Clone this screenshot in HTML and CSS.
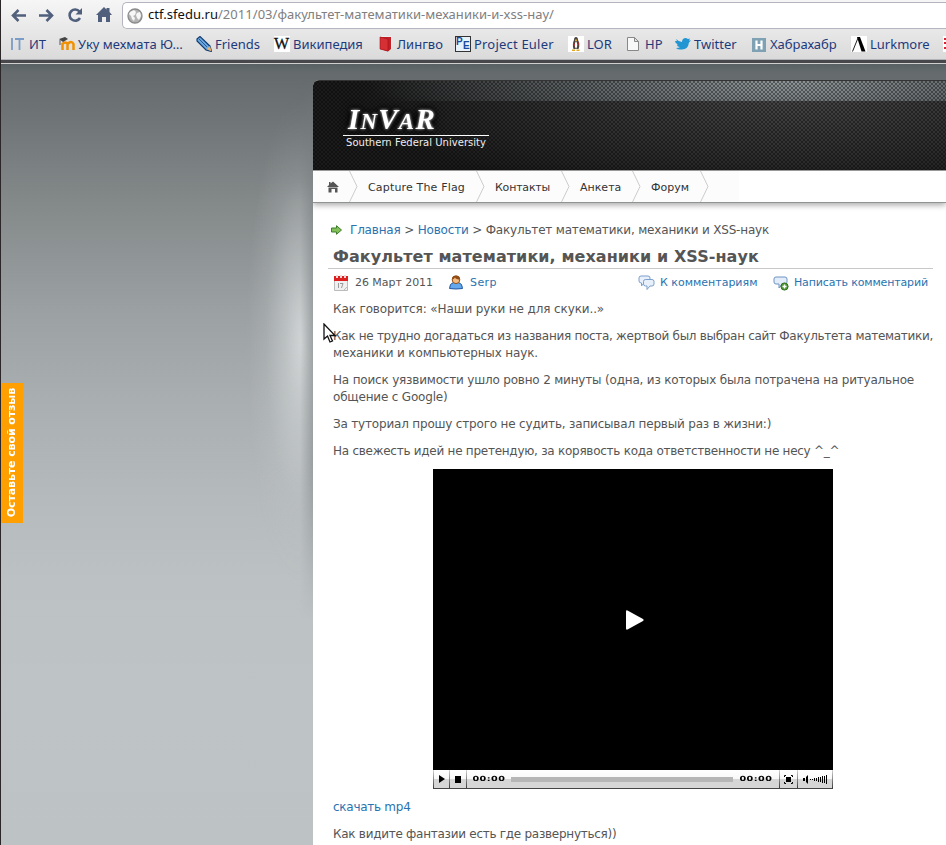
FILE: index.html
```html
<!DOCTYPE html>
<html lang="ru">
<head>
<meta charset="utf-8">
<title>Факультет математики, механики и XSS-наук</title>
<link rel="stylesheet" href="styles.css">
</head>
<body>
<div class="window">
  <header class="chrome">
    <div class="toolbar">
      <svg class="nav-icons" width="122" height="30" viewBox="0 0 122 30" fill="none" stroke="#505f7c" stroke-width="2.6">
        <path d="M13 15.500h13M18.500 10l-5.500 5.500 5.500 5.500"/>
        <path d="M39 15.500h13M46.500 10l5.500 5.500-5.500 5.500"/>
        <path d="M79.500 11.500A5.600 5.600 0 1 0 80 18"/>
        <path d="M82 8v6.500h-6.500z" fill="#505f7c" stroke="none"/>
        <path d="M96 15l8-8 2.500 2.500V8h3v4l2.500 3h-2v7h-4v-5h-4v5h-4v-7z" fill="#505f7c" stroke="none"/>
      </svg>
      <div class="omnibox">
        <svg width="16" height="16" viewBox="0 0 16 16"><circle cx="8" cy="8" r="7" fill="#b4b4b4" stroke="#8a8a8a" stroke-width="1.300"/><path d="M3 4l4-2 2 2-1 3-2 1 2 2-1 3-2-2-1-3-2-2zM10 5l3-1 1 4-2 4-2-2-1-3z" fill="#f6f6f6"/></svg>
        <span class="url"><b>ctf.sfedu.ru</b>/2011/03/факультет-математики-механики-и-xss-нау/</span>
      </div>
    </div>
    <nav class="bookmarks">
      <a><svg width="16" height="16" viewBox="0 0 16 16"><path d="M2 2v12M5 3h9M9.500 3v11" stroke="#7a9cc6" stroke-width="1.800" fill="none"/></svg>ИТ</a>
      <a><svg width="16" height="16" viewBox="0 0 16 16"><path d="M3.500 14V7M3.500 8q3-3 5 0v6M8.500 8q4-4 6 0v6" fill="none" stroke="#f29100" stroke-width="2.500"/><path d="M0 3l6-2 3 2-5 3z" fill="#444"/><path d="M1 4v5" stroke="#555"/></svg>Уку мехмата Ю…</a>
      <a><svg width="16" height="16" viewBox="0 0 16 16"><path d="M1 3l3-2.500L14 10l1.500 5.500L10 14 1 5z" fill="#6da7dd" stroke="#123c70" stroke-width="1.200"/><path d="M3 3l8 8M5 2l8 8" stroke="#245a98"/><path d="M11 13l3-3 1.500 5.500z" fill="#e8b070"/></svg>Friends</a>
      <a><span class="fav wiki">W</span>Википедия</a>
      <a><svg width="16" height="16" viewBox="0 0 16 16"><path d="M2 1h11v12l-3 2.500L2 13z" fill="#c21f26"/><path d="M3 .5h10.500v12" fill="none" stroke="#eee"/><path d="M2 1l8 2v12l-8-2z" fill="#d63034" stroke="#a01118" stroke-width=".6"/></svg>Лингво</a>
      <a class="pe"><span class="fav euler"><i>P</i><i class="low">E</i></span>Project Euler</a>
      <a><svg width="16" height="16" viewBox="0 0 16 16"><path fill="#fff" d="M0 0h16v16H0z"/><path d="M8 1q2 0 2 3 2.500 4 .5 9H5.500Q4 8 6 4 6 1 8 1z" fill="#4a4440"/><path d="M8 5q2.500 4 0 8-2.500-4 0-8z" fill="#fff"/><path d="M5 7l2 1-1 3zM10 6l1 1-1 3z" fill="#c4262b"/><path d="M4 13.500h3V15H4zM8.500 13.500h3V15h-3zM7 3.500h2v1.500H7z" fill="#e0a423"/></svg>LOR</a>
      <a><svg width="16" height="16" viewBox="0 0 16 16"><path d="M1.500 1.500h7l4 4v9h-11zM8.500 1.500v4h4" fill="#f8f8f8" stroke="#888"/></svg>HP</a>
      <a><svg width="16" height="16" viewBox="0 0 16 16"><path d="M1 3q3 3 6 3 0-4 4-4l2 1 2-.5-1 2 2 0-2 2q-1 7-7 7-4 .5-6-1.500 3 0 4-1-3-.5-3-2.500h1Q0 7 0 5h2z" fill="#2296d2"/></svg>Twitter</a>
      <a><svg width="16" height="16" viewBox="0 0 16 16"><path fill="#7ea1b4" d="M1 2h14v14H1z"/><path d="M5.500 4.500v9M10.500 4.500v9M5 9h6" stroke="#fff" stroke-width="2.200"/></svg>Хабрахабр</a>
      <a><svg width="16" height="16" viewBox="0 0 16 16"><path fill="#fff" d="M0 0h16v16H0z"/><path d="M6 1h3l5.500 14.500h-4z" fill="#000"/><path d="M7 2L1.500 15.500" stroke="#222"/></svg>Lurkmore</a>
      <a><svg width="16" height="16" viewBox="0 0 16 16"><path fill="#fff" d="M0 0h16v16H0z"/><path d="M1 3h15M1 7h15M1 12h15" stroke="#e0202a" stroke-width="2"/></svg></a>
    </nav>
  </header>
  <div class="page">
    <div class="glow"></div>
    <div class="feedback"><span>Оставьте свой отзыв</span></div>
    <main class="site">
      <div class="banner">
        <div class="logo">
          <div class="logo-name"><span><b>I</b>N<b>V</b>A<b>R</b></span></div>
          <div class="logo-sub">Southern Federal University</div>
        </div>
      </div>
      <nav class="menu">
        <a class="home"><svg width="12" height="12" viewBox="0 0 12 12" fill="#555"><path d="M0 6l2-2V1h1.500v1.500L6 .5 12 6zM1.500 6.500h9V11.500h-2.500V8h-3.500v3.500h-3z"/></svg></a>
        <svg class="sep" viewBox="0 0 9 31"><path d="M.5 0l7.500 15.500L.5 31"/></svg>
        <a class="item flag">Capture The Flag</a>
        <svg class="sep" viewBox="0 0 9 31"><path d="M.5 0l7.500 15.500L.5 31"/></svg>
        <a class="item contacts">Контакты</a>
        <svg class="sep" viewBox="0 0 9 31"><path d="M.5 0l7.500 15.500L.5 31"/></svg>
        <a class="item form">Анкета</a>
        <svg class="sep" viewBox="0 0 9 31"><path d="M.5 0l7.500 15.500L.5 31"/></svg>
        <a class="item forum">Форум</a>
        <svg class="sep" viewBox="0 0 9 31"><path d="M.5 0l7.500 15.500L.5 31"/></svg>
      </nav>
      <article class="post">
        <div class="crumbs">
          <svg width="12" height="10" viewBox="0 0 12 10"><path d="M.5 3h5V.7L10.500 5 5.500 9.300V7h-5z" fill="#83c05a" stroke="#3d7d2b"/></svg>
          <span><a>Главная</a> &gt; <a>Новости</a> &gt; Факультет математики, механики и XSS-наук</span>
        </div>
        <h1>Факультет математики, механики и XSS-наук</h1>
        <div class="meta">
          <svg width="16" height="16" viewBox="0 0 16 16"><path d="M1.500 3h13v12.500h-13z" fill="#f0f0f0" stroke="#bbb"/><path d="M1 1h14v5H1z" fill="#dc2020"/><path d="M3 0h2v3H3zM7 0h2v3H7zM11 0h2v3h-2z" fill="#f5dada"/><path d="M5.500 8v5M7 8.500h3L8.500 13" stroke="#999" fill="none"/><path d="M11 15l3.500-3.500" stroke="#bbb"/></svg>
          <span class="date">26 Март 2011</span>
          <svg width="16" height="16" viewBox="0 0 16 16"><path d="M1.500 13.500q0-5 4-6h5q4 1 4 6-6.500 1-13 0z" fill="#66a8ec" stroke="#2458a4"/><circle cx="8" cy="4.800" r="3.800" fill="#f5bd82" stroke="#8f4e1c"/><path d="M4 4.500q0-4 4-4t4 4Q8 4.500 7 2.500 6 4.500 4 4.500z" fill="#924c16"/></svg>
          <a class="author">Serp</a>
          <svg class="to-comments" width="17" height="16" viewBox="0 0 17 16"><g fill="#e8f1fb" stroke="#7d9fcb"><path d="M3 1h7q2 0 2 2v3q0 2-2 2H6l-2.500 3V8Q1 8 1 6V3q0-2 2-2z"/><path d="M7.500 4.500H14q2 0 2 2v2.500q0 2-2 2h-2l-3 3.500V11H7.500q-2 0-2-2V6.500q0-2 2-2z"/></g></svg>
          <a class="goto">К комментариям</a>
          <svg width="16" height="16" viewBox="0 0 16 16"><path d="M3 2h9q2 0 2 2v3q0 2-2 2H9l-3 4V9H3Q1 9 1 7V4q0-2 2-2z" fill="#e3edf9" stroke="#6f94c4"/><circle cx="11.500" cy="11.500" r="3.600" fill="#4e9838" stroke="#32701f"/><path d="M9.500 11.500h4M11.500 9.500v4" stroke="#fff" stroke-width="1.400"/></svg>
          <a class="write">Написать комментарий</a>
        </div>
        <p class="t1">Как говорится: «Наши руки не для скуки..»</p>
        <p><span class="t2">Как не трудно догадаться из названия поста, жертвой был выбран сайт Факультета математики,</span><br><span class="t3">механики и компьютерных наук.</span></p>
        <p class="t4">На поиск уязвимости ушло ровно 2 минуты (одна, из которых была потрачена на ритуальное<br>общение с Google)</p>
        <p class="t4">За туториал прошу строго не судить, записывал первый раз в жизни:)</p>
        <p class="t5">На свежесть идей не претендую, за корявость кода ответственности не несу ^_^</p>
        <div class="player">
          <div class="screen"><svg width="20" height="22" viewBox="0 0 20 22"><path d="M1 2.500Q1 .8 2.500 1.500L18 10q1.500 1 0 2L2.500 20.500Q1 21 1 19.500z" fill="#fff"/></svg></div>
          <div class="controls">
            <span class="btn play"><svg width="8" height="8" viewBox="0 0 8 8"><path d="M1 0l6 4-6 4z"/></svg></span>
            <span class="btn stop"><svg width="6" height="7" viewBox="0 0 6 7"><path d="M0 0h6v7H0z"/></svg></span>
            <span class="time"><b>00:00</b></span>
            <span class="track"></span>
            <span class="time right"><b>00:00</b></span>
            <span class="btn full"><svg width="9" height="9" viewBox="0 0 9 9"><path d="M2 2h5v5H2z"/><path d="M.5 2V.5H2M7 .5h1.500V2M8.500 7v1.500H7M2 8.500H.5V7" fill="none" stroke="#000"/></svg></span>
            <span class="btn vol"><svg width="25" height="9" viewBox="0 0 25 9"><path d="M0 3h2v3H0zM3 2l2-2v9L3 7zM7 4h1v1H7zM9 4h1v1H9zM11 3h1v3h-1zM13 3h1v3h-1zM15 2h1v5h-1zM17 2h1v5h-1zM19 1h1v7h-1zM21 1h1v7h-1zM23 0h1v9h-1z"/></svg></span>
          </div>
        </div>
        <p class="t6"><a>скачать mp4</a></p>
        <p class="t6">Как видите фантазии есть где развернуться))</p>
      </article>
    </main>
    <svg class="cursor" width="14" height="21" viewBox="0 0 14 21"><path d="M1 1v15l3.500-3 2.500 6 2.500-1-2.500-5.500h5z" fill="#fff" stroke="#111" stroke-width="1.300"/></svg>
  </div>
</div>
</body>
</html>
```
FILE: styles.css
```css
* { box-sizing: border-box; }
body {
  margin: 0;
  font: 12px/17px "DejaVu Sans", sans-serif;
  color: #555;
  white-space: nowrap;
}
svg { display: block; flex: none; }
a { color: #2a73b0; }

.window {
  width: 946px;
  height: 845px;
  overflow: hidden;
  display: flex;
  flex-direction: column;
  border-left: 1px solid #2b2728;
}

/* browser chrome */
.chrome {
  height: 64px;
  flex: none;
  background: linear-gradient(#f6f6f6, #e9e9ea 28px, #dadada 59px);
  border-bottom: 1px solid #cfcfcf;
  box-shadow: inset 0 -3px #48484b, inset 0 -4px #b2b2bb;
}
.toolbar { display: flex; height: 30px; }
.nav-icons { margin-left: -1px; }
.omnibox {
  display: flex;
  align-items: center;
  flex: 1;
  height: 27px;
  margin-top: 2px;
  padding-left: 4px;
  gap: 5px;
  background: #fff;
  border: 1px solid #b5b5c0;
  border-right: 0;
  border-radius: 5px 0 0 5px;
}
.url { font: 13px/23px "Noto Sans", sans-serif; color: #808080; letter-spacing: .035px; padding-bottom: 2px; }
.url b { font-weight: 400; color: #111; }
.bookmarks {
  display: grid;
  grid-template-columns: 49px 137px 78px 104px 77px 113px 58px 49px 76px 100px 92px 20px;
  height: 29px;
  margin-left: 9px;
  font: 13px/28px "Noto Sans", sans-serif;
}
.bookmarks a { display: flex; align-items: center; height: 28px; gap: 3px; color: #1d3a7c; }
.bookmarks .pe { letter-spacing: .2px; }
.fav { width: 16px; height: 16px; background: #fff; flex: none; }
.wiki { font: 16px/16px "Liberation Serif", serif; color: #111; -webkit-text-stroke: .3px #111; }
.euler {
  display: flex;
  border: 1px solid #333;
  font: bold 10px/9px "Liberation Sans", sans-serif;
  letter-spacing: 0;
  color: #174c9c;
  background: #e8f2fb;
}
.euler i { font-style: normal; width: 7px; }
.euler .low { padding-top: 4px; }

/* page backdrop */
.page {
  position: relative;
  flex: 1;
  padding: 16px 0 0 312px;
  background: linear-gradient(#596063, #656b6d 8px, #6d7375 46px, #838889 136px, #9ba0a2 246px, #a9aeb0 336px, #b5babc 436px, #bcc1c3 516px, #bec3c5 636px, #bdc2c4);
}
.glow {
  position: absolute;
  left: 232px;
  top: 16px;
  width: 80px;
  height: 540px;
  background:
    linear-gradient(90deg, transparent 67px, rgba(120,126,128,.5)),
    radial-gradient(ellipse 56px 250px at 69px 262px, rgba(222,225,226,.8), rgba(215,219,220,.5) 30%, rgba(205,209,211,.18) 65%, transparent);
  mask-image: linear-gradient(transparent, #000 120px, #000 380px, transparent);
}
.feedback {
  position: absolute;
  left: 0;
  top: 319px;
  width: 22px;
  height: 140px;
  display: flex;
  align-items: center;
  justify-content: center;
  background: #ff9f00;
  color: #fff;
  font: bold 11px/22px "DejaVu Sans", sans-serif;
  letter-spacing: -.1px;
}
.feedback span { writing-mode: vertical-rl; transform: rotate(180deg); }
.cursor { position: absolute; left: 322px; top: 259px; }

/* site */
.site { height: 765px; background: #fff; border-top-left-radius: 6px; overflow: hidden; }
.banner {
  height: 90px;
  padding: 23px 0 0 30px;
  border-top: 1px solid #333;
  background:
    radial-gradient(circle at 1px 1px, rgba(0,0,0,.38) .8px, transparent 1.3px) 0 0 / 4px 4px,
    radial-gradient(circle at 3px 3px, rgba(0,0,0,.38) .8px, transparent 1.3px) 0 0 / 4px 4px,
    radial-gradient(ellipse 420px 70px at 475px 0, rgba(165,175,178,.75), rgba(130,140,144,.5) 50%, transparent) 0 0 / 100% 20px no-repeat,
    radial-gradient(ellipse 440px 110px at 475px 10px, #484848, #1b1b1b);
}
.logo { width: 146px; }
.logo-name {
  height: 32px;
  padding-left: 5px;
  font: italic bold 23px/31px "Liberation Serif", serif;
  color: #fff;
  border-bottom: 1px solid #fff;
  letter-spacing: 1.2px;
}
.logo-name span { filter: drop-shadow(0 0 1.5px #ddd) drop-shadow(0 0 3px #000) drop-shadow(0 0 3px #000); display: inline-block; height: 31px; }
.logo-name b { font-size: 29px; }
.logo-sub { padding-left: 3px; font-size: 10px; line-height: 13px; color: #eee; letter-spacing: .03px; }
.menu {
  display: flex;
  height: 33px;
  border-top: 1px solid #999;
  border-bottom: 1px solid #8f9391;
  background: linear-gradient(90deg, #fcfcfc 426px, #fff 426px);
  box-shadow: 0 2px 6px rgba(0,0,0,.35);
  font-size: 11px;
  line-height: 33px;
}
.home { width: 36px; padding: 10px 0 0 14px; }
.sep { width: 9px; height: 31px; fill: none; stroke: #ccc; }
.item { padding-left: 10px; color: #333; }
.flag { width: 118px; letter-spacing: .17px; }
.contacts { width: 76px; letter-spacing: -.2px; }
.form { width: 62px; }
.forum { width: 59px; }

/* post */
.post { padding: 19px 13px 0 20px; }
.crumbs { display: flex; align-items: center; gap: 7px; margin-left: -2px; letter-spacing: -.185px; }
.crumbs svg { margin-top: -2px; }
h1 {
  height: 30px;
  margin: 0 0 0 -5px;
  padding: 8px 0 0 5px;
  font-size: 16px;
  line-height: 20px;
  letter-spacing: .07px;
  border-bottom: 1px solid #c8c8c8;
}
.meta { display: flex; align-items: center; height: 27px; margin-bottom: 5px; font-size: 11px; }
.date { width: 93px; margin-left: 6px; letter-spacing: -.05px; }
.author { margin-left: 6px; letter-spacing: .4px; }
.to-comments { margin-left: auto; }
.goto { width: 113px; margin-left: 5px; }
.write { width: 139px; margin-left: 5px; letter-spacing: -.15px; }
p { margin: 0 0 10px; }
.t1 { letter-spacing: -.12px; }
.t2 { letter-spacing: -.295px; }
.t3 { letter-spacing: -.15px; }
.t4 { letter-spacing: -.187px; }
.t5 { letter-spacing: -.26px; }
.t6 { letter-spacing: -.27px; }

.player { width: 400px; margin: -1px 0 10px 100px; }
.screen {
  height: 301px;
  display: flex;
  align-items: center;
  justify-content: center;
  padding-left: 4px;
  background: #000;
}
.controls {
  display: flex;
  align-items: stretch;
  height: 19px;
  border-bottom: 1px solid #444;
  background: linear-gradient(#fff, #f8f8f8 9px, #d6d6d6 9px);
}
.btn {
  display: flex;
  align-items: center;
  justify-content: center;
  border-left: 1px solid;
  border-image: linear-gradient(#ddd, #333) 1;
}
.play { width: 16px; }
.stop { width: 18px; border-right: 1px solid; }
.time { width: 44px; display: flex; align-items: center; justify-content: center; }
.time.right { width: 46px; }
.time b { font-size: 7px; line-height: 19px; padding-top: 1px; color: #000; letter-spacing: .3px; transform: scaleX(1.38); }
.track { flex: 1; height: 5px; margin-top: 7px; background: #b6b6b6; }
.full { width: 18px; }
.vol { width: 36px; border-right: 1px solid; }
```
